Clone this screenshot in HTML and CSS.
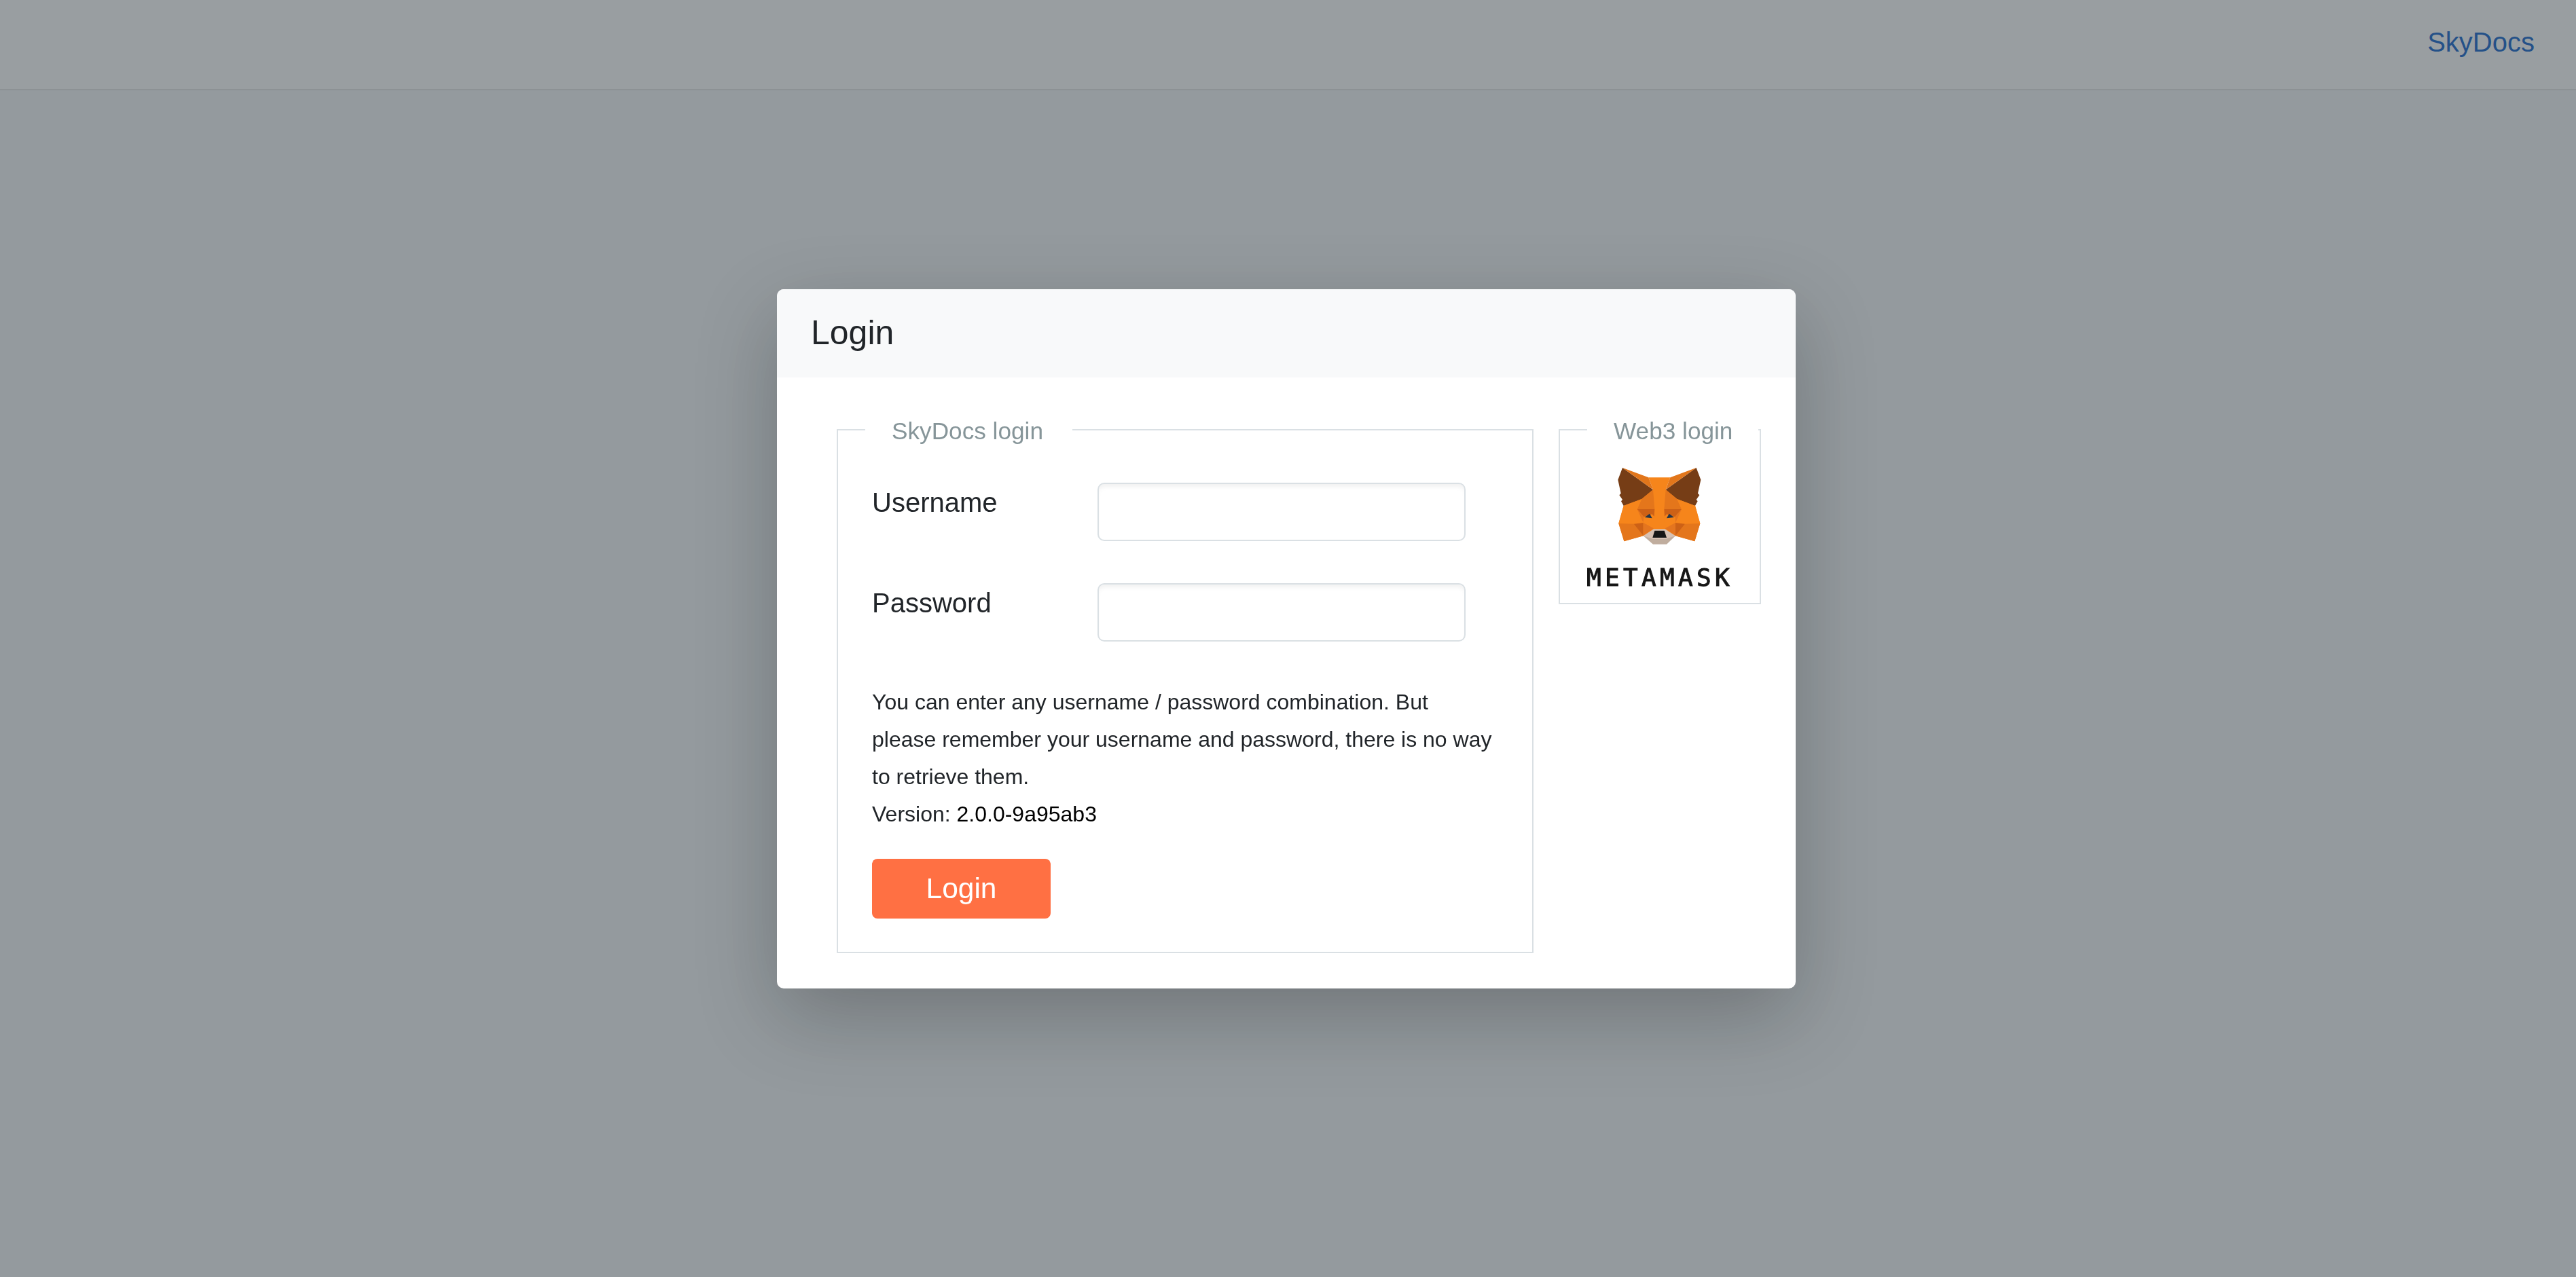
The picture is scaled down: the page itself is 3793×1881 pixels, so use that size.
FILE: index.html
```html
<!DOCTYPE html>
<html lang="en">
<head>
    <meta charset="UTF-8">
    <meta name="viewport" content="width=device-width, initial-scale=1.0">
    <title>SkyDocs</title>
    <link rel="stylesheet" href="styles.css">
</head>
<body>
    <!-- Top bar -->
    <nav class="navbar">
        <a class="brand" href="#">SkyDocs</a>
    </nav>

    <!-- Login dialog -->
    <div class="backdrop">
        <div class="modal">
            <div class="modal-header">Login</div>
            <div class="modal-body">
                <fieldset class="login-box">
                    <legend>SkyDocs login</legend>
                    <div class="form-row">
                        <label for="username">Username</label>
                        <input type="text" id="username">
                    </div>
                    <div class="form-row">
                        <label for="password">Password</label>
                        <input type="password" id="password">
                    </div>
                    <p class="note">
                        You can enter any username / password combination. But<br>
                        please remember your username and password, there is no way<br>
                        to retrieve them.<br>
                        Version: <span class="version">2.0.0-9a95ab3</span>
                    </p>
                    <button class="login-btn" type="button">Login</button>
                </fieldset>

                <fieldset class="web3-box">
                    <legend>Web3 login</legend>
                    <svg class="fox" viewBox="0 0 570 450" role="img" aria-label="MetaMask fox">
                        <defs>
                            <g id="foxHalf">
                                <polygon fill="#763d16" points="120,57 255,154 205,195 125,225 114,205 120,198 106,178 113,170 100,110"/>
                                <polygon fill="#e2761b" points="120,57 235,100 255,154"/>
                                <polygon fill="#e4761b" points="255,154 262,240 185,240 205,195"/>
                                <polygon fill="#f6851b" points="125,225 205,195 185,240 212,273 170,305 103,303"/>
                                <polygon fill="#cd6116" points="185,240 262,240 260,272 250,262 214,274"/>
                                <polygon fill="#e4751f" points="185,240 214,274 212,300"/>
                                <polygon fill="#f6851b" points="214,274 250,281 262,272 258,325 212,300"/>
                                <polygon fill="#233447" points="218,276 240,260 251,280"/>
                                <polygon fill="#e4761b" points="103,303 170,305 212,358 127,382"/>
                                <polygon fill="#cd6116" points="170,305 212,300 212,358"/>
                                <polygon fill="#e4751f" points="212,300 258,325 212,358"/>
                            </g>
                        </defs>
                        <polygon fill="#f6851b" points="125,225 255,154 235,100 331,100 311,154 441,225 463,303 439,382 354,358 212,358 127,382 103,303"/>
                        <use href="#foxHalf"/>
                        <use href="#foxHalf" transform="matrix(-1 0 0 1 566 0)"/>
                        <polygon fill="#d7c1b3" points="212,358 258,328 308,328 354,358 315,378 255,378"/>
                        <polygon fill="#c0ad9e" points="212,358 255,372 311,372 354,358 315,395 255,395"/>
                        <polygon fill="#161616" points="262,335 305,335 315,366 253,366"/>
                    </svg>
                    <div class="wordmark">METAMASK</div>
                </fieldset>
            </div>
        </div>
    </div>
</body>
</html>
```

FILE: styles.css
```css
body {
    margin: 0;
    min-height: 100vh;
    font-family: "Liberation Sans", Arial, sans-serif;
    color: #212529;
    background-color: #eceff1;
}

.navbar {
    display: flex;
    justify-content: flex-end;
    align-items: center;
    height: 125px;
    padding: 0 61px 6px 0;
    background-color: #f6f6f7;
    border-bottom: 2px solid #dcdcdd;
}

.brand {
    font-size: 40px;
    color: #0d5dc4;
    text-decoration: none;
}

/* Dims the page and centres the dialog */
.backdrop {
    position: fixed;
    inset: 0;
    padding-right: 5px;
    display: flex;
    justify-content: center;
    align-items: center;
    background-color: rgba(60, 70, 75, 0.5);
}

.modal {
    width: 1500px;
    background-color: #fff;
    border-radius: 10px;
    box-shadow: 0 40px 120px rgba(0, 0, 0, 0.24);
    overflow: hidden;
}

.modal-header {
    height: 130px;
    box-sizing: border-box;
    padding: 0 50px;
    font-size: 50px;
    line-height: 128px;
    background-color: #f8f9fa;
}

.modal-body {
    display: flex;
    align-items: flex-start;
    gap: 37px;
    padding: 51px 51px 52px 88px;
}

fieldset {
    margin: 0;
    border: 2px solid #dae0e4;
    min-width: 0;
    box-sizing: border-box;
}

legend {
    margin-left: -10px;
    padding: 4px 43px 0 39px;
    font-size: 35.2px;
    line-height: 48px;
    white-space: nowrap;
    color: #869599;
}

.login-box {
    width: 1026px;
    padding: 52px 50px 49px 50px;
}

.form-row {
    display: flex;
    align-items: flex-start;
    margin-bottom: 62px;
}

.form-row label {
    width: 332px;
    font-size: 40px;
    line-height: 58px;
}

.form-row input {
    width: 542px;
    height: 86px;
    box-sizing: border-box;
    border: 2px solid #dae0e4;
    border-radius: 10px;
    box-shadow: inset 0 7px 7px -3px rgba(0, 0, 0, 0.06);
}

.note {
    margin: 1px 0 38px 0;
    font-size: 32px;
    line-height: 55px;
}

.version {
    color: #000;
}

.login-btn {
    display: block;
    width: 263px;
    height: 88px;
    border: none;
    border-radius: 8px;
    font-family: inherit;
    font-size: 42.5px;
    color: #fff;
    background-color: #ff7043;
    cursor: pointer;
}

.web3-box {
    width: 298px;
    height: 283px;
    padding: 11px 0 0 0;
    display: flex;
    flex-direction: column;
    align-items: center;
}

.web3-box legend {
    margin-left: 40px;
    padding-right: 38px;
}

.fox {
    display: block;
    flex: none;
    width: 190px;
    height: 150px;
}

.wordmark {
    margin-top: 9px;
    font-family: "DejaVu Sans Mono", monospace;
    font-size: 36px;
    line-height: 44px;
    letter-spacing: 5.3px;
    -webkit-text-stroke: 1px #161616;
    color: #161616;
}
```
